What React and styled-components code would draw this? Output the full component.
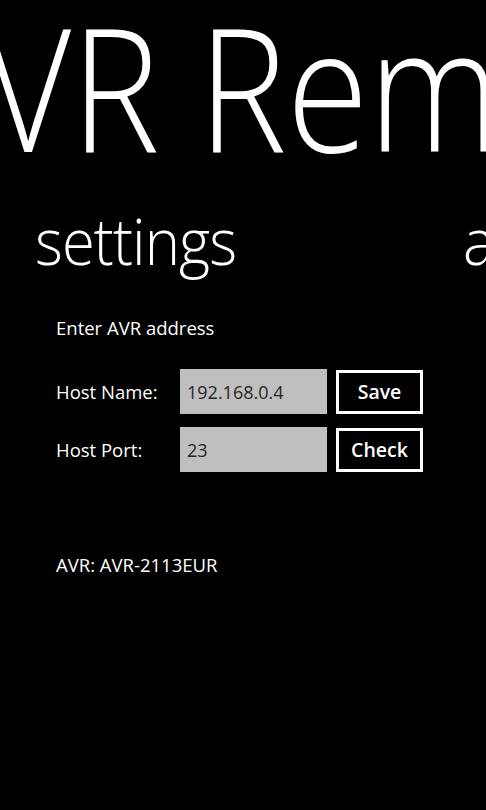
import React from "react";
import styled, { createGlobalStyle } from "styled-components";

const GlobalStyle = createGlobalStyle`
    html, body {
        margin: 0;
        padding: 0;
        background: #000;
    }
    body {
        font-family: "Open Sans", "Noto Sans", sans-serif;
        color: #fff;
    }
`;

const Screen = styled.div`
    width: 486px;
    height: 810px;
    background: #000;
    overflow: hidden;
`;

// the panorama title runs past both edges of the screen
const Title = styled.div`
    margin: 0 0 0 -104px;
    font-family: "Open Sans", sans-serif;
    font-size: 171px;
    font-weight: 300;
    line-height: 1;
    white-space: nowrap;
    transform: scaleX(0.87);
    transform-origin: left top;
`;

const Items = styled.div`
    display: flex;
    margin-top: 37px;
`;

const Item = styled.section`
    flex: 0 0 ${({ width }) => width || "428px"};
    padding-left: 35px;
    box-sizing: border-box;
`;

const Header = styled.h2`
    margin: 0;
    font-family: "Open Sans", sans-serif;
    font-size: 65px;
    font-weight: 300;
    line-height: 1;
    letter-spacing: -1px;
    white-space: nowrap;
    transform: scaleX(0.92);
    transform-origin: left top;
`;

const Body = styled.div`
    padding-left: 21px;
    padding-top: 43px;
`;

const Text = styled.div`
    font-size: 18.5px;
    line-height: 24px;
    margin-top: ${({ top }) => top || "0"};
    white-space: nowrap;
`;

const Form = styled.div`
    display: grid;
    grid-template-columns: 115px 147px 87px;
    column-gap: 9px;
    row-gap: 13px;
    margin-top: 29px;
    align-items: center;
`;

const Label = styled.label`
    font-size: 18.5px;
    line-height: 24px;
    white-space: nowrap;
`;

const Input = styled.div`
    height: 45px;
    background: #bfbfbf;
    color: #262626;
    font-size: 18px;
    display: flex;
    align-items: center;
    padding-left: 7px;
    box-sizing: border-box;
`;

const Button = styled.button`
    height: 44px;
    box-sizing: border-box;
    border: 3px solid #fff;
    background: #000;
    color: #fff;
    font-family: "Open Sans", "Noto Sans", sans-serif;
    font-size: 19.5px;
    font-weight: 600;
    padding: 0;
    cursor: pointer;
`;

export default function App() {
    return (
        <Screen>
            <GlobalStyle />
            <Title>AVR Remote</Title>
            <Items>
                <Item>
                    <Header>settings</Header>
                    <Body>
                        <Text>Enter AVR address</Text>
                        <Form>
                            <Label>Host Name:</Label>
                            <Input>192.168.0.4</Input>
                            <Button>Save</Button>
                            <Label>Host Port:</Label>
                            <Input>23</Input>
                            <Button>Check</Button>
                        </Form>
                        <Text top="81px">AVR: AVR-2113EUR</Text>
                    </Body>
                </Item>
                <Item>
                    <Header>about</Header>
                </Item>
            </Items>
        </Screen>
    );
}
